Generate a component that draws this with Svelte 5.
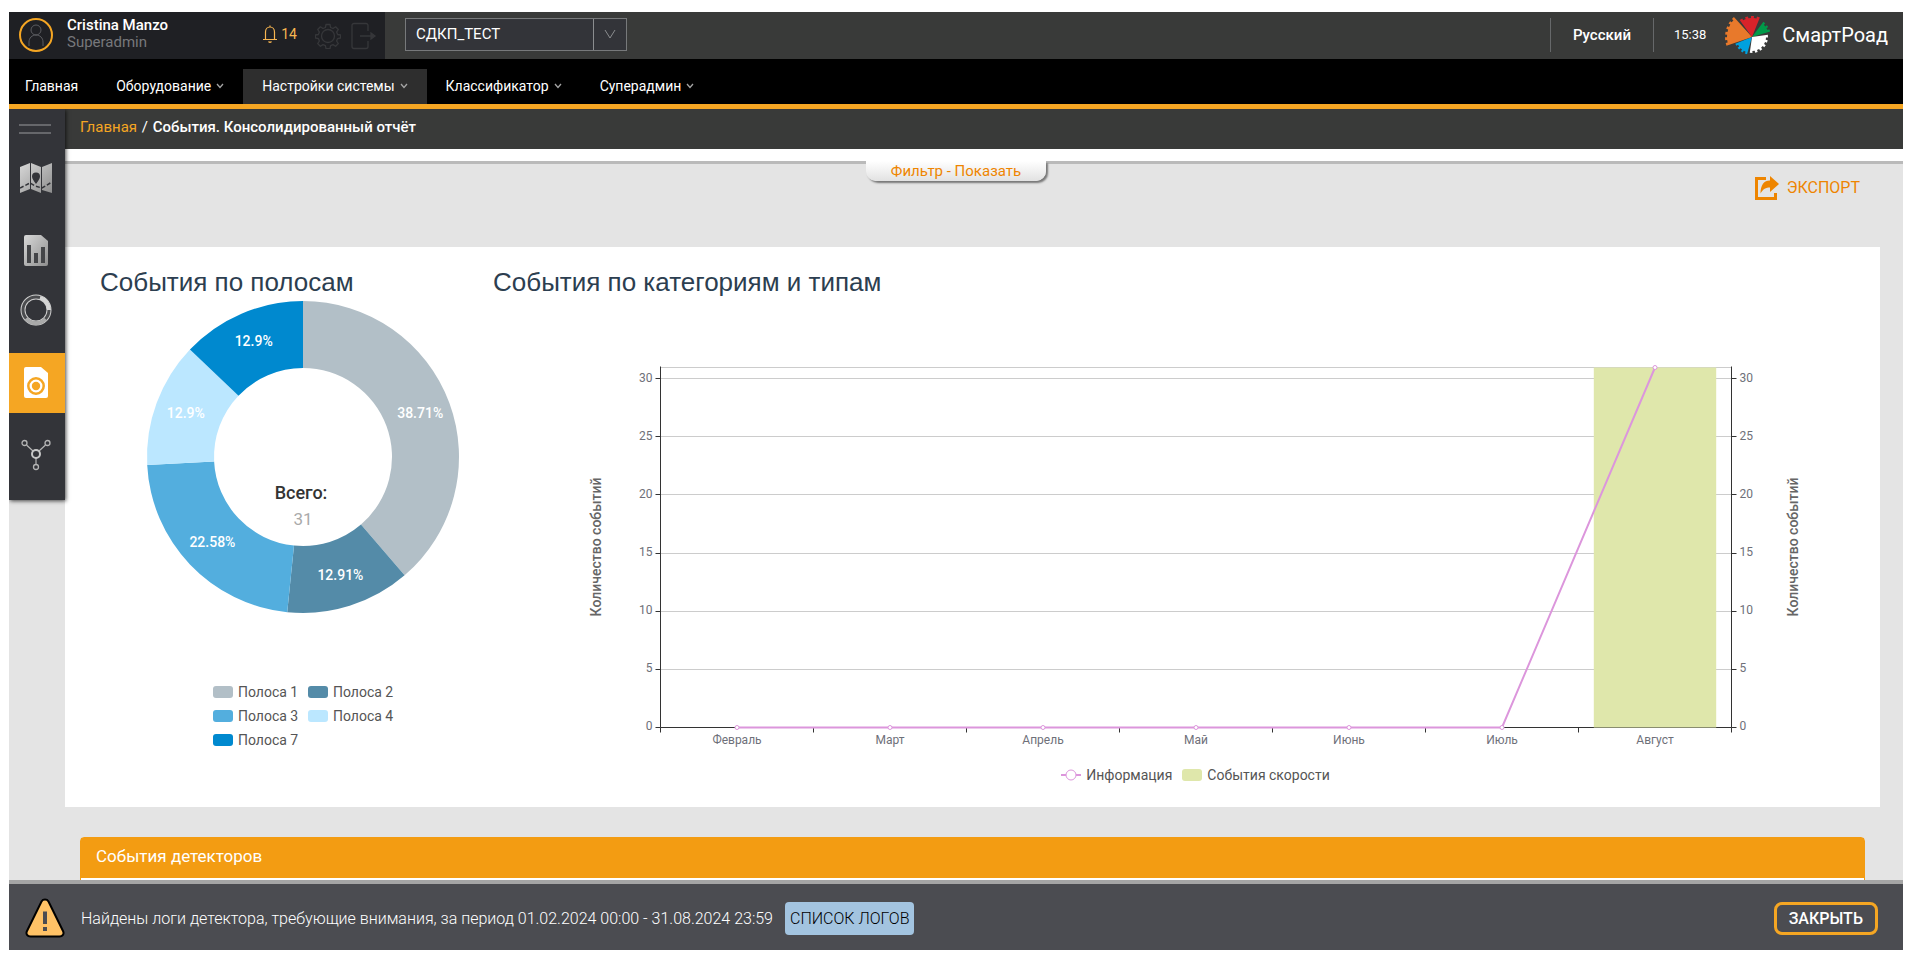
<script lang="ts">
  const navItems = [
    { label: 'Главная', menu: false, active: false },
    { label: 'Оборудование', menu: true, active: false },
    { label: 'Настройки системы', menu: true, active: true },
    { label: 'Классификатор', menu: true, active: false },
    { label: 'Суперадмин', menu: true, active: false }
  ];

  const lanes = [
    { name: 'Полоса 1', value: 12, label: '38.71%', color: '#b2bfc7' },
    { name: 'Полоса 2', value: 4, label: '12.91%', color: '#548ba8' },
    { name: 'Полоса 3', value: 7, label: '22.58%', color: '#53aede' },
    { name: 'Полоса 4', value: 4, label: '12.9%', color: '#bbe7ff' },
    { name: 'Полоса 7', value: 4, label: '12.9%', color: '#0089cf' }
  ];
  const total = lanes.reduce((sum, lane) => sum + lane.value, 0);

  const cx = 203;
  const cy = 160;

  function point(r: number, share: number) {
    const a = share * Math.PI * 2;
    return [cx + r * Math.sin(a), cy - r * Math.cos(a)];
  }

  let passed = 0;
  const slices = lanes.map((lane) => {
    const from = passed / total;
    passed += lane.value;
    const to = passed / total;
    const big = to - from > 0.5 ? 1 : 0;
    return {
      ...lane,
      d: `M${point(156, from)} A156 156 0 ${big} 1 ${point(156, to)} L${point(89, to)} A89 89 0 ${big} 0 ${point(89, from)} Z`,
      text: point(125, (from + to) / 2)
    };
  });

  const months = ['Февраль', 'Март', 'Апрель', 'Май', 'Июнь', 'Июль', 'Август'];
  const info = [0, 0, 0, 0, 0, 0, 31];
  const speed = [0, 0, 0, 0, 0, 0, 31];
  const ticks = [0, 5, 10, 15, 20, 25, 30];
  const top = 70.5;
  const bottom = 430.5;
  const left = 167.5;

  let chartWidth = $state(1387);
  let right = $derived(Math.round(chartWidth) - 148.5);
  let band = $derived((right - left) / months.length);

  const y = (v: number) => bottom - (v * (bottom - top)) / 31;
  const crisp = (v: number) => Math.round(v + 0.25) - 0.5;
  let centers = $derived(months.map((_, i) => left + band * (i + 0.5)));
  let line = $derived(info.map((v, i) => `${centers[i]},${y(v)}`).join(' '));

  // gear-edged wedge of the logo
  function wedge(a0: number, a1: number, r: number, teeth: number) {
    const rad = Math.PI / 180;
    const step = (a1 - a0) / (teeth * 2 - 1);
    const pts = ['0,0'];
    for (let i = 0; i < teeth * 2 - 1; i++) {
      const rr = i % 2 ? r - 2 : r;
      for (const a of [a0 + i * step, a0 + (i + 1) * step]) {
        pts.push(`${(rr * Math.cos(a * rad)).toFixed(2)},${(rr * Math.sin(a * rad)).toFixed(2)}`);
      }
    }
    return pts.join(' ');
  }
  const wedges = [
    { color: '#e8792b', points: wedge(161, 228, 27, 6) },
    { color: '#d8232a', points: wedge(234, 292, 21, 4) },
    { color: '#009a49', points: wedge(307, 343, 19, 3) },
    { color: '#ffffff', points: wedge(-8, 98, 16, 6) },
    { color: '#00a1de', points: wedge(106, 158, 18, 4) }
  ];
</script>

<div class="page">
  <header class="topbar">
    <div class="user">
      <svg class="avatar" viewBox="0 0 36 36" width="36" height="36" fill="none">
        <circle cx="18" cy="18" r="16" stroke="#f5a623" stroke-width="2" />
        <circle cx="18" cy="13" r="5" stroke="#5b5c60" />
        <path d="M11 29v-4c0-4 3-7 7-7s7 3 7 7v4" stroke="#5b5c60" />
      </svg>
      <div class="who">
        <span class="name">Cristina Manzo</span>
        <span class="role">Superadmin</span>
      </div>
      <button class="bell" aria-label="Уведомления: 14">
        <svg viewBox="0 0 14 18" width="14" height="18" fill="none" stroke="#f7b551" stroke-width="1.2">
          <path d="M0 14.500h14M2.500 14V7c0-3 2-5 4.500-5s4.500 2 4.500 5v7M5.500 16.500c.8.8 2.200.8 3 0M7 .5V2" />
        </svg>
        <span>14</span>
      </button>
      <button class="icon-btn" aria-label="Настройки">
        <svg viewBox="0 0 26 26" width="26" height="26" fill="none" stroke="#36373a" stroke-width="1.3" stroke-linejoin="round">
          <path d="M11 1.500h4l.6 3 2.400 1 2.600-1.700 2.700 2.700-1.700 2.600 1 2.400 3 .5v3l-3 .6-1 2.400 1.700 2.600-2.700 2.700-2.600-1.700-2.400 1-.6 3h-4l-.6-3-2.400-1-2.600 1.700-2.700-2.700 1.700-2.600-1-2.400-3-.6v-3l3-.5 1-2.400-1.700-2.600 2.700-2.700 2.600 1.700 2.400-1z" />
          <circle cx="13" cy="13" r="6.500" />
        </svg>
      </button>
      <button class="icon-btn" aria-label="Выход">
        <svg viewBox="0 0 26 28" width="26" height="28" fill="none" stroke="#36373a" stroke-width="1.3">
          <path d="M17 9V3.500c0-1-.7-2-2-2H3c-1 0-2 .7-2 2v21c0 1.300.7 2 2 2h12c1.300 0 2-.9 2-2V19M9 14h15" />
          <path d="M20 11l4 3-4 3z" fill="#36373a" />
        </svg>
      </button>
    </div>
    <div class="site">
      <select aria-label="Объект">
        <option>СДКП_ТЕСТ</option>
      </select>
      <svg viewBox="0 0 33 31" width="33" height="31" fill="none" stroke="#8b8d8f">
        <path d="M.5 0v31M12 11l5 8 5-8" />
      </svg>
    </div>
    <div class="tools">
      <button class="lang">Русский</button>
      <time>15:38</time>
      <svg class="logo" viewBox="-27 -22 46 40" width="46" height="40">
        {#each wedges as w}
          <polygon points={w.points} fill={w.color} />
        {/each}
      </svg>
      <span class="brand">СмартРоад</span>
    </div>
  </header>

  <nav class="menu">
    {#each navItems as item}
      <a href="#menu" class:active={item.active}>
        {item.label}
        {#if item.menu}
          <svg viewBox="0 0 8 6" width="8" height="6" fill="none" stroke="#a5a5a5" stroke-width="1.3">
            <path d="M1 1l3 3.500L7 1" />
          </svg>
        {/if}
      </a>
    {/each}
  </nav>

  <div class="body">
    <aside class="sidebar">
      <button class="burger" aria-label="Меню"><i></i><i></i></button>
      <a href="#map" class="side map" aria-label="Карта">
        <svg viewBox="0 0 32 32" width="32" height="32">
          <defs>
            <linearGradient id="silver" x1="0" y1="0" x2="1" y2="1">
              <stop offset="0" stop-color="#d8d8d8" />
              <stop offset="1" stop-color="#8e8e8e" />
            </linearGradient>
          </defs>
          <path d="M0 5 10 1v26L0 31zM11 1l10 4v26l-10-4zM22 5l10-4v30l-10-3z" fill="url(#silver)" />
          <path d="M16 22c-2-3-4-5-4-7.500a4 4 0 0 1 8 0c0 2.500-2 4.500-4 7.500z" fill="#333439" />
          <path d="M0 26l10-5 5 3 7 2 10-6" fill="none" stroke="#333439" stroke-width="1.500" stroke-dasharray="4 2" />
        </svg>
      </a>
      <a href="#reports" class="side" aria-label="Отчёты">
        <svg viewBox="0 0 24 31" width="24" height="31">
          <path d="M2 0h15l7 6v23a2 2 0 0 1-2 2H2a2 2 0 0 1-2-2V2a2 2 0 0 1 2-2z" fill="url(#silver)" />
          <path d="M3 10h4v18H3zM10 18h4v10h-4zM17 12h4v16h-4z" fill="#444548" />
        </svg>
      </a>
      <a href="#stats" class="side" aria-label="Статистика">
        <svg viewBox="0 0 32 32" width="32" height="32" fill="none">
          <circle cx="16" cy="16" r="13" stroke="#cfcfcf" stroke-width="5" />
          <circle cx="16" cy="16" r="13" stroke="#4b4c4f" stroke-width="3" />
          <path d="M20 3.600A13 13 0 0 1 29 16" stroke="#d5d5d5" stroke-width="4" />
          <path d="M25.500 25A13 13 0 0 1 6 24.500" stroke="#a9a9a9" stroke-width="4" />
        </svg>
      </a>
      <a href="#events" class="side active" aria-label="События">
        <svg viewBox="0 0 24 31" width="24" height="31">
          <path d="M2 0h15l7 6v23a2 2 0 0 1-2 2H2a2 2 0 0 1-2-2V2a2 2 0 0 1 2-2z" fill="#fff" />
          <circle cx="12" cy="19" r="7.700" fill="none" stroke="#f5a623" stroke-width="2.500" />
          <circle cx="12" cy="19" r="4.200" fill="#f5a623" />
        </svg>
      </a>
      <a href="#network" class="side last" aria-label="Сеть">
        <svg viewBox="0 0 30 32" width="30" height="32" fill="none" stroke="#b4b4b4">
          <path d="M5.500 6 12 12M24.500 6 18 12M15 19v6" stroke-width="1.200" />
          <circle cx="3.500" cy="4" r="2.500" stroke-width="1.300" />
          <circle cx="26.500" cy="4" r="2.500" stroke-width="1.300" />
          <circle cx="15" cy="28" r="2.500" stroke-width="1.300" />
          <circle cx="15" cy="15" r="4" stroke="#c8c8c8" stroke-width="2" />
        </svg>
      </a>
    </aside>

    <main>
      <div class="crumbs"><a href="#home">Главная</a> <span>/</span> События. Консолидированный отчёт</div>
      <div class="filter">
        <button>Фильтр - Показать</button>
      </div>
      <div class="actions">
        <button class="export">
          <svg viewBox="0 0 24 24" width="24" height="24">
            <path d="M11 2.500H1.500v20h19V17" fill="none" stroke="#ee8500" stroke-width="3" />
            <path d="M15 0l9 8-9 8v-4.500c-4 0-7 1.500-9.500 6C5.500 9 9 4.500 15 4.500z" fill="#ee8500" />
          </svg>
          ЭКСПОРТ
        </button>
      </div>

      <div class="card">
        <section class="lanes">
          <h2>События по полосам</h2>
          <svg width="393" height="320" viewBox="0 0 393 320">
            {#each slices as s}
              <path d={s.d} fill={s.color} />
              <text class="pct" x={s.text[0]} y={s.text[1] + 4}>{s.label}</text>
            {/each}
            <text class="total" x={cx - 2} y="202">Всего:</text>
            <text class="sum" x={cx} y="228">{total}</text>
          </svg>
          <ul>
            {#each lanes as lane}
              <li><i class="swatch" style="background: {lane.color}"></i>{lane.name}</li>
            {/each}
          </ul>
        </section>

        <section class="types">
          <h2>События по категориям и типам</h2>
          <div class="plot" bind:clientWidth={chartWidth}>
            <svg width={chartWidth} height="460">
              <path class="grid" d="M{left} {top}H{right}" />
              {#each ticks.slice(1) as t}
                <path class="grid" d="M{left} {crisp(y(t))}H{right}" />
              {/each}
              <path class="axis" d="M{left} {top - 1}V{bottom}H{right}V{top - 1}" />
              {#each ticks as t}
                <path class="axis" d="M{left - 5} {crisp(y(t))}h5M{right} {crisp(y(t))}h5" />
                <text class="tick end" x={left - 8} y={Math.floor(y(t)) + 3}>{t}</text>
                <text class="tick" x={right + 8} y={Math.floor(y(t)) + 3}>{t}</text>
              {/each}
              {#each months as month, i}
                <path class="axis" d="M{crisp(left + band * i)} {bottom}v5" />
                <text class="tick mid" x={centers[i]} y={bottom + 16}>{month}</text>
              {/each}
              <path class="axis" d="M{right} {bottom}v5" />
              {#each speed as v, i}
                {#if v}
                  <rect x={centers[i] - band * 0.4} y={y(v)} width={band * 0.8} height={bottom - y(v)} fill="#dfe7ab" />
                {/if}
              {/each}
              <polyline points={line} fill="none" stroke="#dc96dc" stroke-width="2" />
              {#each info as v, i}
                <circle cx={centers[i]} cy={y(v)} r="2" fill="#fff" stroke="#dc96dc" />
              {/each}
              <text class="axis-name" transform="translate(108 250) rotate(-90)">Количество событий</text>
              <text class="axis-name" transform="translate({right + 66} 250) rotate(-90)">Количество событий</text>
            </svg>
          </div>
          <div class="key">
            <svg viewBox="0 0 20 12" width="20" height="12" fill="#fff" stroke="#dc96dc">
              <path d="M0 6h20" stroke-width="2" />
              <circle cx="10" cy="6" r="5" />
            </svg>
            <span>Информация</span>
            <i class="swatch speed"></i>
            <span>События скорости</span>
          </div>
        </section>
      </div>

      <section class="detectors">
        <h3>События детекторов</h3>
      </section>
    </main>
  </div>

  <footer class="notice">
    <svg viewBox="0 0 40 40" width="40" height="40">
      <path d="M16.500 3.500c1.500-2.600 5.500-2.600 7 0L38 33c1.500 3-.5 5.500-3.500 5.500h-29C2.500 38.500.5 36 2 33z" fill="#ffc266" stroke="#000" stroke-width="2" />
      <path d="M18 13.500h4V26h-4zM18 29h4v4h-4z" fill="#4b4c51" />
    </svg>
    <p>Найдены логи детектора, требующие внимания, за период 01.02.2024 00:00 - 31.08.2024 23:59</p>
    <button class="logs">СПИСОК ЛОГОВ</button>
    <button class="close">ЗАКРЫТЬ</button>
  </footer>
</div>

<style>
  :global(body) {
    margin: 0;
    background: #fff;
    overflow: hidden;
  }

  .page {
    display: flex;
    flex-direction: column;
    box-sizing: border-box;
    height: 100vh;
    border: solid #fff;
    border-width: 12px 8px 11px 9px;
    font-family: Roboto, 'Liberation Sans', sans-serif;
    font-size: 14px;
    color: #fff;
  }

  button {
    padding: 0;
    border: 0;
    background: none;
    color: inherit;
    font: inherit;
    cursor: pointer;
  }

  a {
    color: inherit;
    text-decoration: none;
  }

  svg {
    display: block;
    flex-shrink: 0;
  }

  .topbar {
    display: flex;
    align-items: center;
    height: 47px;
    flex-shrink: 0;
    background: #393a39;
  }

  .user {
    display: flex;
    align-items: center;
    box-sizing: border-box;
    width: 376px;
    height: 100%;
    padding: 0 8px 0 9px;
    background: #1f2024;
  }

  .avatar {
    margin-bottom: 2px;
  }

  .who {
    display: flex;
    flex-direction: column;
    flex: 1;
    margin-left: 13px;
    padding-bottom: 4px;
    line-height: 17px;
  }

  .name {
    font-size: 15px;
    font-weight: 500;
  }

  .role {
    font-size: 15px;
    color: #77787b;
  }

  .bell {
    display: flex;
    align-items: center;
    gap: 4px;
    margin-right: 18px;
    padding-bottom: 4px;
    color: #f7b551;
  }

  .icon-btn + .icon-btn {
    margin-left: 10px;
  }

  .site {
    position: relative;
    width: 222px;
    margin-left: 20px;
    padding-bottom: 2px;
  }

  .site select {
    display: block;
    width: 100%;
    height: 33px;
    padding: 0 10px 2px;
    appearance: none;
    border: 1px solid #77797b;
    border-radius: 0;
    background: #333439;
    color: #fff;
    font: 400 15px Roboto, sans-serif;
  }

  .site svg {
    position: absolute;
    top: 1px;
    right: 1px;
    pointer-events: none;
  }

  .tools {
    display: flex;
    align-items: center;
    margin-left: auto;
    padding: 0 15px 2px 0;
  }

  .lang {
    height: 34px;
    padding: 0 22px;
    border: solid #66686a;
    border-width: 0 1px;
    font-size: 15px;
    font-weight: 500;
  }

  time {
    margin: 0 19px 0 20px;
    font-size: 13px;
  }

  .brand {
    margin-left: 11px;
    font-size: 20px;
  }

  .menu {
    display: flex;
    flex-shrink: 0;
    height: 35px;
    padding-top: 10px;
    border-bottom: 5px solid #f5a623;
    background: #000;
  }

  .menu a {
    display: flex;
    align-items: center;
    gap: 5px;
    padding: 0 19px 2px;
    font-size: 14px;
  }

  .menu a:first-child {
    padding-left: 16px;
  }

  .menu a.active {
    background: #2e2e2e;
  }

  .body {
    display: flex;
    align-items: flex-start;
    flex: 1;
    min-height: 0;
    overflow: hidden;
    background: #e4e4e4;
  }

  .sidebar {
    position: relative;
    z-index: 1;
    display: flex;
    flex-direction: column;
    width: 56px;
    flex-shrink: 0;
    background: #333439;
    box-shadow: 1px 1px 4px rgba(0, 0, 0, 0.7);
  }

  .burger {
    display: flex;
    flex-direction: column;
    gap: 6px;
    padding: 15px 14px 15px 10px;
  }

  .burger i {
    width: 32px;
    height: 2px;
    background: #66676b;
  }

  .side {
    display: flex;
    align-items: center;
    justify-content: center;
    box-sizing: border-box;
    height: 60px;
    padding: 0 2px 2px 0;
  }

  .side.map {
    margin-bottom: 12px;
  }

  .side.active {
    margin-top: 12px;
    background: #f5a623;
  }

  .side.last {
    height: 87px;
    padding-bottom: 4px;
  }

  main {
    flex: 1;
    min-width: 0;
  }

  .crumbs {
    height: 40px;
    padding-left: 15px;
    background: #393a39;
    font-size: 15px;
    font-weight: 500;
    line-height: 36px;
  }

  .crumbs a {
    color: #f5a623;
    font-weight: 400;
  }

  .crumbs span {
    margin: 0 1px;
    font-weight: 400;
  }

  .filter {
    display: flex;
    justify-content: center;
    height: 3px;
    margin-left: -56px;
    border-top: 12px solid #fff;
    background: #bababa;
  }

  .filter button {
    width: 180px;
    height: 20px;
    flex-shrink: 0;
    border-radius: 0 0 10px 10px;
    background: linear-gradient(#fff, #e2e2e2);
    box-shadow: 2px 2px 2px #777;
    color: #ee8500;
    font-size: 15px;
    line-height: 20px;
    clip-path: inset(0 -6px -6px 0);
  }

  .actions {
    display: flex;
    justify-content: flex-end;
    padding: 12px 43px 47px 0;
  }

  .export {
    display: flex;
    align-items: center;
    gap: 8px;
    color: #ee8500;
    font-size: 16px;
    line-height: 22px;
  }

  .card {
    display: flex;
    margin-right: 23px;
    padding: 20px 0 20px 35px;
    background: #fff;
    color: #555;
  }

  h2 {
    margin: 0;
    color: #2c3e50;
    font: 26px / 30px 'Liberation Sans', Arial, sans-serif;
  }

  .lanes {
    width: 393px;
    flex-shrink: 0;
  }

  .lanes ul {
    display: grid;
    grid-template-columns: 95px 95px;
    margin: 63px 0 0 113px;
    padding: 0;
    list-style: none;
    line-height: 24px;
  }

  .lanes li {
    display: flex;
    align-items: center;
    gap: 5px;
  }

  .swatch {
    width: 20px;
    height: 12px;
    border-radius: 3px;
  }

  text {
    font-size: 14px;
  }

  .pct {
    fill: #fff;
    font-weight: 500;
    text-anchor: middle;
  }

  .total {
    fill: #333;
    font-size: 18px;
    font-weight: 500;
    text-anchor: middle;
  }

  .sum {
    fill: #aaa;
    font-size: 17px;
    text-anchor: middle;
  }

  .types {
    flex: 1;
    min-width: 0;
  }

  .plot {
    overflow: hidden;
  }

  .grid {
    fill: none;
    stroke: #ccc;
  }

  .axis {
    fill: none;
    stroke: #333;
  }

  .tick {
    fill: #6e7079;
    font-size: 12px;
  }

  .end {
    text-anchor: end;
  }

  .mid {
    text-anchor: middle;
  }

  .axis-name {
    fill: #666;
    font-weight: 500;
    text-anchor: middle;
  }

  .key {
    display: flex;
    align-items: center;
    justify-content: center;
    gap: 5px;
    padding: 6px 0 0 18px;
    line-height: 24px;
  }

  .swatch.speed {
    margin-left: 5px;
    background: #dfe7ab;
  }

  .detectors {
    height: 120px;
    margin: 30px 38px 0 15px;
    border: 1px solid #f39c12;
    border-radius: 4px 4px 0 0;
    background: #fff;
  }

  h3 {
    margin: 0;
    padding: 0 15px 3px;
    background: #f39c12;
    font-size: 17px;
    font-weight: 400;
    line-height: 37px;
  }

  .notice {
    display: flex;
    align-items: center;
    flex-shrink: 0;
    height: 64px;
    padding: 2px 25px 0 16px;
    border-top: 4px solid #a5a5a5;
    background: #4b4c51;
    font-size: 16px;
    font-weight: 300;
  }

  .notice p {
    margin: 0 12px 0 16px;
  }

  .logs {
    height: 33px;
    padding: 0 5px;
    border-radius: 4px;
    background: #a3c4e0;
    color: #000;
  }

  .close {
    height: 33px;
    margin-left: auto;
    padding: 0 12px;
    border: 3px solid #f5a623;
    border-radius: 8px;
    font-weight: 500;
  }
</style>
